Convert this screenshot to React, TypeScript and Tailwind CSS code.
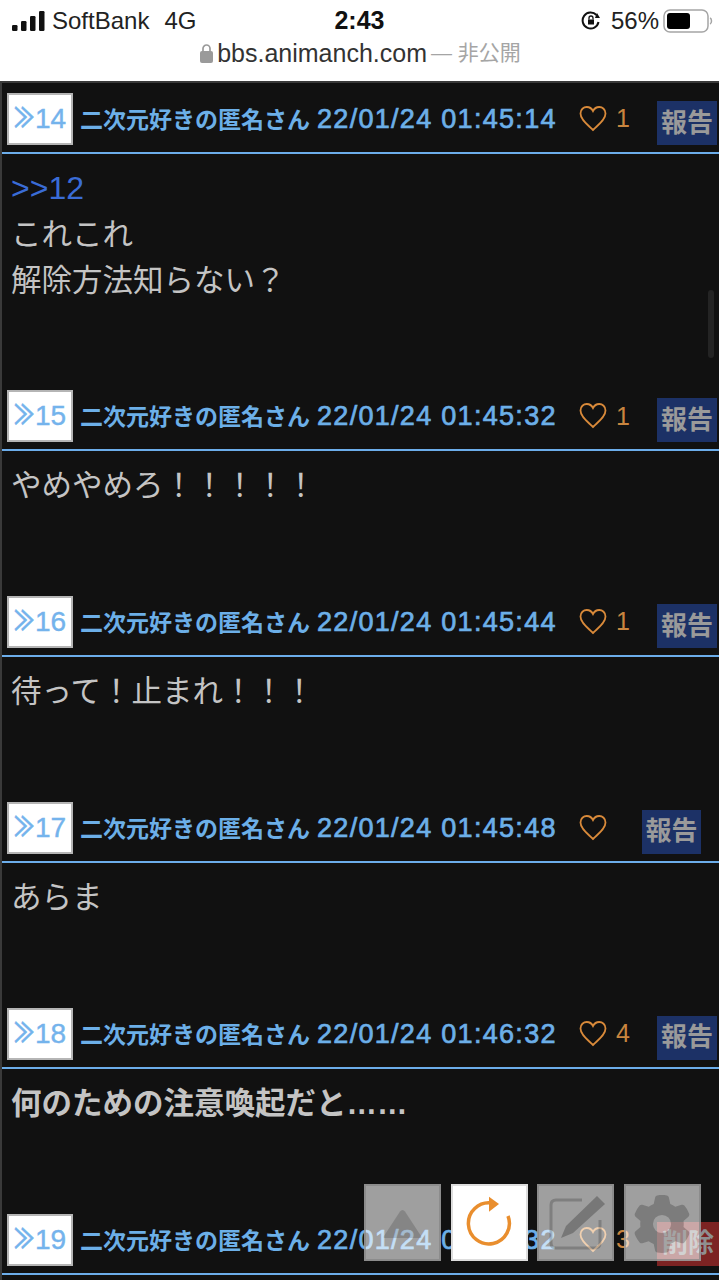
import { FaGear } from 'react-icons/fa6';

const JP = "font-['Liberation_Sans','Noto_Sans_CJK_JP',sans-serif]";

type PostData = {
  no: number;
  time: string;
  likes?: number;
  lines: string[];
  anchor?: string;
  bold?: boolean;
  mine?: boolean;
};

// スレッドの表示分
const posts: PostData[] = [
  { no: 14, time: '22/01/24 01:45:14', likes: 1, anchor: '>>12', lines: ['これこれ', '解除方法知らない？'] },
  { no: 15, time: '22/01/24 01:45:32', likes: 1, lines: ['やめやめろ！！！！！'] },
  { no: 16, time: '22/01/24 01:45:44', likes: 1, lines: ['待って！止まれ！！！'] },
  { no: 17, time: '22/01/24 01:45:48', lines: ['あらま'] },
  { no: 18, time: '22/01/24 01:46:32', likes: 4, lines: ['何のための注意喚起だと……'], bold: true },
  { no: 19, time: '22/01/24 01:46:32', likes: 3, lines: [], mine: true },
];

function Heart() {
  return (
    <svg width="28" height="28" viewBox="0 0 28 28" fill="none" stroke="#d98a3a" strokeWidth="1.8" className="shrink-0">
      <path d="M14 25 C9 20 1.5 15 1.5 8.5 C1.5 4.5 4.5 2 7.8 2 C10.5 2 12.8 3.6 14 6 C15.2 3.6 17.5 2 20.2 2 C23.5 2 26.5 4.5 26.5 8.5 C26.5 15 19 20 14 25 Z" />
    </svg>
  );
}

function PostHeader({ post }: { post: PostData }) {
  const noLikes = post.likes === undefined;
  return (
    <div className="flex h-[65px] items-start pl-[5px] pt-[6px]">
      <div className="flex h-[52px] w-[66px] shrink-0 items-center justify-center border-2 border-[#b5b5b5] bg-white text-[28px] leading-none text-[#74b3ec] [-webkit-text-stroke:0.4px_#74b3ec]">
        <span className="inline-block w-[21px] origin-left scale-x-[0.72] text-[28px] font-bold leading-none">≫</span>
        {post.no}
      </div>
      <div className="ml-[7px] mt-[11px] w-[477px] shrink-0 whitespace-nowrap text-[23px] font-bold leading-[30px] text-[#6cafe8]">
        <span>二次元好きの匿名さん</span>
        <span className="ml-[7px] text-[27px] font-normal tracking-[1.3px] [-webkit-text-stroke:0.7px_#6cafe8]">{post.time}</span>
      </div>
      <div className="ml-[22px] mt-[11px] flex h-[30px] w-[52px] shrink-0 items-center">
        <Heart />
        {post.likes !== undefined && <span className="ml-[9px] text-[25px] text-[#c9853f]">{post.likes}</span>}
      </div>
      <div
        className={
          'mt-[8px] flex h-[44px] items-center justify-center text-[26px] font-bold ' +
          (post.mine
            ? 'ml-[26px] w-[62px] bg-[#7c2323] text-[#8f8f8f]'
            : noLikes
              ? 'ml-[11px] w-[59px] bg-[#1c3166] text-[#9a9a9a]'
              : 'ml-[26px] w-[60px] bg-[#1c3166] text-[#9a9a9a]')
        }
      >
        {post.mine ? '削除' : '報告'}
      </div>
    </div>
  );
}

function Post({ post }: { post: PostData }) {
  return (
    <section>
      <PostHeader post={post} />
      <div className="h-[2px] bg-[#6cadea]" />
      <div className={'pl-[9px] pt-[11px] pb-[81.8px] text-[30.5px] leading-[46px] text-[#c4c4c4] ' + (post.bold ? 'font-bold' : '')}>
        {post.anchor && <div className="h-[45.6px] text-[32px] text-[#3a6cd6]">{post.anchor}</div>}
        {post.lines.map((l) => (
          <div key={l}>{l}</div>
        ))}
      </div>
    </section>
  );
}

function FloatButton({ children, white }: { children: React.ReactNode; white?: boolean }) {
  return (
    <div className={'h-[77px] w-[77px] border-2 ' + (white ? 'border-[#dddddd] bg-white' : 'border-[#858585]/70 bg-white/60')}>
      {children}
    </div>
  );
}

export default function App() {
  return (
    <div className={'relative h-[1280px] w-[719px] overflow-hidden bg-white ' + JP}>
      {/* iOS ステータスバー + URL */}
      <div className="h-[81px] bg-white text-[#111]">
        <div className="grid h-[40px] grid-cols-3 items-center pt-[1px]">
          <div className="flex items-center whitespace-nowrap pl-[12px] text-[24px] leading-none text-[#222]">
            <svg width="33" height="20" viewBox="0 0 33 20" fill="#111">
              <rect x="0" y="14" width="5.5" height="6" rx="1.2" />
              <rect x="9" y="10" width="5.5" height="10" rx="1.2" />
              <rect x="18" y="5" width="5.5" height="15" rx="1.2" />
              <rect x="27" y="0" width="5.5" height="20" rx="1.2" />
            </svg>
            <span className="ml-[7px]">SoftBank</span>
            <span className="ml-[15px]">4G</span>
          </div>
          <div className="text-center text-[25px] font-bold leading-none">2:43</div>
          <div className="flex items-center justify-end pr-[6px] text-[24px] leading-none text-[#222]">
            <svg width="20" height="20" viewBox="0 0 20 20" fill="none" stroke="#111" strokeWidth="2">
              <path d="M17.5 11 A8 8 0 1 1 15.5 4" />
              <path d="M14 7 L19 7 L16 2 Z" fill="#111" stroke="none" />
              <rect x="7" y="8.5" width="6" height="5" fill="#111" stroke="none" />
              <path d="M8 8.5 V7 a2 2 0 0 1 4 0 V8.5" strokeWidth="1.3" />
            </svg>
            <span className="ml-[10px]">56%</span>
            <svg width="50" height="24" viewBox="0 0 50 24" className="ml-[4px]">
              <rect x="1" y="1" width="44" height="22" rx="6" fill="none" stroke="#a5a5a5" strokeWidth="1.5" />
              <rect x="4" y="4" width="23" height="16" rx="3" fill="#000" />
              <path d="M47 9 c2 .6 2 5.4 0 6" fill="none" stroke="#a5a5a5" strokeWidth="1.5" />
            </svg>
          </div>
        </div>
        <div className="flex items-center justify-center pt-[1px] pl-[2px] text-[25px] leading-[24px]">
          <svg width="13" height="19" viewBox="0 0 13 19" className="mr-[4px]" fill="#9a9a9a">
            <rect x="0" y="7" width="13" height="12" rx="2" />
            <path d="M3 8 V4.5 a3.5 3.5 0 0 1 7 0 V8" fill="none" stroke="#9a9a9a" strokeWidth="1.7" />
          </svg>
          <span className="text-[#333]">bbs.animanch.com</span>
          <span className="ml-[4px] text-[21px] text-[#a5a5a5]">— 非公開</span>
        </div>
      </div>

      {/* スレッド本体 */}
      <main className="h-[1199px] overflow-hidden border-l-2 border-t-2 border-[#3a3a3a] bg-[#111111] pt-[4px]">
        {posts.map((p) => (
          <Post key={p.no} post={p} />
        ))}
      </main>

      {/* スクロールバー */}
      <div className="absolute left-[708px] top-[290px] h-[68px] w-[6px] rounded-full bg-[#242424]" />

      {/* 固定ボタン */}
      <div className="absolute left-[364px] top-[1184px] flex gap-[9.5px]">
        <FloatButton>
          <svg width="73" height="73" viewBox="2 2 73 73">
            <path d="M38.5 26 Q40 26 41 27.5 L57 52 Q58 54 56 54 L21 54 Q19 54 20 52 L36 27.5 Q37 26 38.5 26 Z" fill="#000" fillOpacity="0.16" />
          </svg>
        </FloatButton>
        <FloatButton white>
          <svg width="73" height="73" viewBox="2 2 73 73" fill="none" stroke="#e98e2e" strokeWidth="3.5">
            <path d="M40 19 A20.5 20.5 0 1 0 57 32" />
            <path d="M38 12.7 L48 20 L38 27.7 Z" fill="#e98e2e" stroke="none" />
          </svg>
        </FloatButton>
        <FloatButton>
          <svg width="73" height="73" viewBox="2 2 73 73" fill="none" stroke="#000" strokeOpacity="0.2" strokeWidth="3">
            <path d="M45 16 H19 Q14 16 14 21 V59 Q14 64 19 64 H58 Q63 64 63 59 V36" />
            <path d="M60 12 L68 20 L36 49 L24 54 L29 42 Z" fill="#000" fillOpacity="0.25" stroke="none" />
          </svg>
        </FloatButton>
        <FloatButton>
          <div className="flex h-full w-full items-center justify-center pt-[2px]">
            <FaGear size={58} color="rgba(0,0,0,0.22)" />
          </div>
        </FloatButton>
      </div>
    </div>
  );
}
